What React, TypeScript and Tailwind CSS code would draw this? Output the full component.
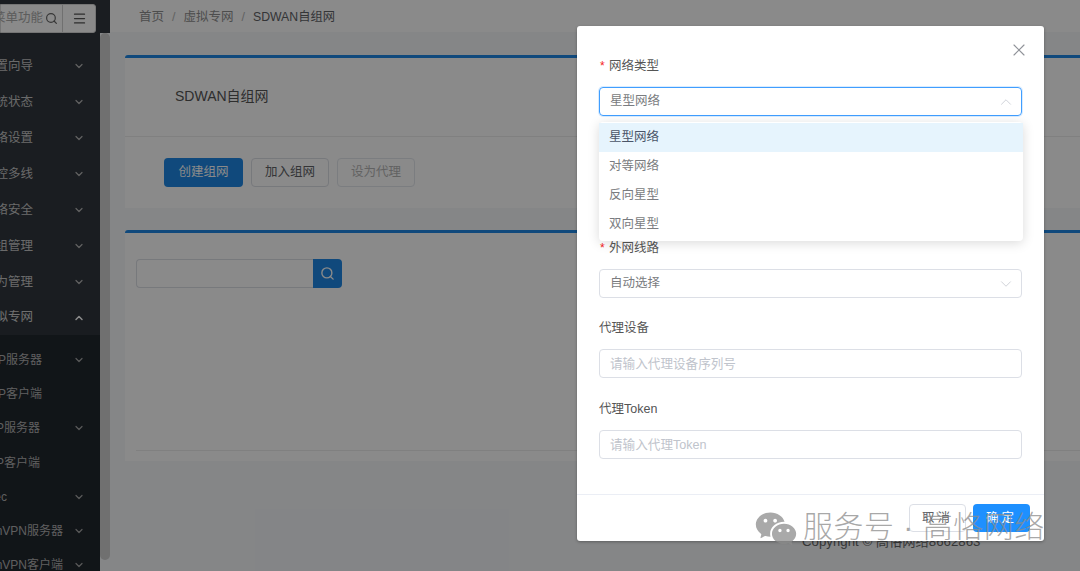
import { ChevronDown, ChevronUp, Menu, Search, X } from "lucide-react";
import { RiWechatFill } from "react-icons/ri";

const topItems = [
  { label: "配置向导" },
  { label: "系统状态" },
  { label: "网络设置" },
  { label: "智控多线" },
  { label: "网络安全" },
  { label: "分组管理" },
  { label: "行为管理" },
];

const subItems = [
  { label: "PPTP服务器", w: "w-[42px]", arrow: true },
  { label: "PPTP客户端", w: "w-[42px]", arrow: false },
  { label: "L2TP服务器", w: "w-[40px]", arrow: true },
  { label: "L2TP客户端", w: "w-[40px]", arrow: false },
  { label: "IPSec", w: "w-[7px]", arrow: true },
  { label: "OpenVPN服务器", w: "w-[63px]", arrow: true },
  { label: "OpenVPN客户端", w: "w-[63px]", arrow: true },
];

function Clipped({ label, w }: { label: string; w: string }) {
  return (
    <span className={`${w} flex justify-end whitespace-nowrap`}>
      <span className="shrink-0">{label}</span>
    </span>
  );
}

function Sidebar() {
  return (
    <aside className="w-[100px] shrink-0 h-full overflow-hidden bg-[#30363d] text-[#c4c4c4] text-[12.5px]">
      <div className="h-[48px] pt-[4px] pr-[4px]">
        <div className="h-[29px] flex items-center bg-white border border-[#d8d8d8] rounded-r-[3px] text-[#aaa]">
          <span className="w-[42px] flex justify-end whitespace-nowrap">
            <span className="shrink-0">搜索菜单功能</span>
          </span>
          <Search className="ml-[2px] w-[13px] h-[13px] text-[#666]" strokeWidth={2.2} />
          <span className="ml-[4px] w-px h-full bg-[#cfcfcf]" />
          <Menu className="ml-[9px] w-[15px] h-[15px] text-[#555]" strokeWidth={2} />
        </div>
      </div>
      {topItems.map((it) => (
        <div key={it.label} className="h-[36px] flex items-center justify-between pr-[15px]">
          <Clipped label={it.label} w="w-[33px]" />
          <ChevronDown className="w-[12px] h-[12px] text-[#b5b5b5]" strokeWidth={2.4} />
        </div>
      ))}
      <div className="h-[35px] flex items-center justify-between pr-[15px] bg-[#2f353c] text-[#d0d0d0]">
        <Clipped label="虚拟专网" w="w-[33px]" />
        <ChevronUp className="w-[12px] h-[12px] text-white" strokeWidth={3} />
      </div>
      <div className="bg-[#20272e] pt-[8px] h-full text-[12px] text-[#b0b0b0]">
        {subItems.map((it) => (
          <div key={it.label} className="h-[34.2px] flex items-center justify-between pr-[15px]">
            <Clipped label={it.label} w={it.w} />
            {it.arrow && <ChevronDown className="w-[12px] h-[12px] text-[#a5a5a5]" strokeWidth={2.4} />}
          </div>
        ))}
      </div>
    </aside>
  );
}

function ScrollColumn() {
  return (
    <div className="w-[10px] shrink-0 h-full flex flex-col">
      <div className="h-[33px] bg-[#30363d]" />
      <div className="h-[527px] rounded-[5px] bg-[#cfcfcf]" />
    </div>
  );
}

function Content() {
  return (
    <main className="flex-1 min-w-0 h-full overflow-hidden flex flex-col">
      <div className="h-[32px] shrink-0 bg-white flex items-center pl-[29px] pt-[2px] text-[12.5px] text-[#8f8f8f] gap-[6px]">
        <span>首页</span>
        <span className="text-[#b5b5b5] mx-[2px]">/</span>
        <span>虚拟专网</span>
        <span className="text-[#b5b5b5] mx-[2px]">/</span>
        <span className="text-[#606266] text-[12.25px]">SDWAN自组网</span>
      </div>
      <div className="pl-[15px] pt-[23px] flex flex-col gap-[22px]">
        <section className="h-[153px] bg-white border-t-[3px] border-[#1e88e5] rounded-tl-[3px] flex flex-col">
          <div className="h-[79px] shrink-0 border-b border-[#ececec] flex items-center pb-[2px] pl-[50px] text-[14px] text-[#555]">
            SDWAN自组网
          </div>
          <div className="flex gap-[8px] pl-[39px] pt-[21px] text-[12.5px]">
            <button className="w-[79px] h-[29px] rounded-[4px] bg-[#1e88e5] text-white">创建组网</button>
            <button className="w-[78px] h-[29px] rounded-[4px] bg-white border border-[#dcdfe6] text-[#606266]">加入组网</button>
            <button className="w-[78px] h-[29px] rounded-[4px] bg-white border border-[#e4e7ed] text-[#b5b5b5]">设为代理</button>
          </div>
        </section>
        <section className="h-[231px] bg-white border-t-[3px] border-[#1e88e5] rounded-tl-[3px] pl-[11px] pt-[26px] flex flex-col">
          <div className="flex h-[29px] w-[206px]">
            <div className="w-[177px] rounded-l-[4px] border border-[#dcdfe6] border-r-0" />
            <div className="w-[29px] rounded-r-[4px] bg-[#1e88e5] flex items-center justify-center">
              <Search className="w-[15px] h-[15px] text-white" strokeWidth={2.2} />
            </div>
          </div>
          <div className="mt-[162px] h-px bg-[#ececec]" />
        </section>
      </div>
      <div className="pl-[692px] pt-[71px] text-[13.25px] text-[#666] whitespace-nowrap">Copyright © 高恪网络8662863</div>
    </main>
  );
}

function Field({ label, required, children }: { label: string; required?: boolean; children: React.ReactNode }) {
  return (
    <div>
      <div className="h-[20px] flex items-center text-[12.5px] text-[#555]">
        {required && <span className="w-[10px] pl-[1px] text-[#f52222] text-[12px] leading-none">*</span>}
        <span>{label}</span>
      </div>
      <div className="mt-[11px]">{children}</div>
    </div>
  );
}

function Modal() {
  return (
    <div className="absolute left-[577px] top-[26px] w-[467px] h-[515px] bg-white rounded-[3px] flex flex-col shadow-[0_1px_3px_rgba(0,0,0,0.3)]">
      <button className="absolute right-[15px] top-[14px] text-[#909399]">
        <X className="w-[20px] h-[20px]" strokeWidth={1.4} />
      </button>
      <div className="flex-1 px-[22px] pt-[30px]">
        <Field label="网络类型" required>
          <div className="relative">
            <div className="h-[29px] rounded-[4px] border border-[#409eff] shadow-[0_0_0_1px_rgba(64,158,255,0.2)] flex items-center justify-between pl-[10px] pr-[6px] text-[12.5px] text-[#7a7c80]">
              <span>星型网络</span>
              <ChevronUp className="w-[18px] h-[18px] text-[#c0c4cc]" strokeWidth={1} />
            </div>
            <div className="absolute left-0 top-[35px] w-[424px] pt-[1px] pb-[2px] bg-white rounded-[4px] shadow-[0_2px_12px_rgba(0,0,0,0.15)] text-[12.5px] text-[#7a7c80] z-10">
              <div className="h-[29px] flex items-center px-[10px] bg-[#e6f4fd] text-[#4a5568]">星型网络</div>
              <div className="h-[29px] flex items-center px-[10px]">对等网络</div>
              <div className="h-[29px] flex items-center px-[10px]">反向星型</div>
              <div className="h-[29px] flex items-center px-[10px]">双向星型</div>
            </div>
          </div>
        </Field>
        <div className="mt-[122px]">
          <Field label="外网线路" required>
            <div className="h-[29px] rounded-[4px] border border-[#dcdfe6] flex items-center justify-between pl-[10px] pr-[6px] text-[12.5px] text-[#7a7c80]">
              <span>自动选择</span>
              <ChevronDown className="w-[18px] h-[18px] text-[#c0c4cc]" strokeWidth={1} />
            </div>
          </Field>
        </div>
        <div className="mt-[20px]">
          <Field label="代理设备">
            <div className="h-[29px] rounded-[4px] border border-[#dcdfe6] flex items-center pl-[10px] pt-[1px] text-[12.6px] text-[#c0c4cc]">
              请输入代理设备序列号
            </div>
          </Field>
        </div>
        <div className="mt-[21px]">
          <Field label="代理Token">
            <div className="h-[29px] rounded-[4px] border border-[#dcdfe6] flex items-center pl-[10px] pt-[1px] text-[12.6px] text-[#c0c4cc]">
              请输入代理Token
            </div>
          </Field>
        </div>
      </div>
      <div className="h-[47px] shrink-0 border-t border-[#ebeef5] flex justify-end gap-[7px] pr-[14px] pt-[9px] text-[12.5px]">
        <button className="w-[57px] h-[28px] rounded-[4px] border border-[#dcdfe6] bg-white text-[#606266] tracking-[3px]">取消</button>
        <button className="w-[57px] h-[28px] rounded-[4px] bg-[#1e90ff] text-white tracking-[3px]">确定</button>
      </div>
    </div>
  );
}

export default function App() {
  return (
    <div className="relative w-[1080px] h-[571px] overflow-hidden flex bg-[#f5f7fa] font-['Liberation_Sans','Noto_Sans_CJK_SC',sans-serif]">
      <Sidebar />
      <ScrollColumn />
      <Content />
      <div className="absolute inset-0 bg-black/[0.46]" />
      <Modal />
      <div className="absolute left-[754px] top-[507px] flex items-center h-[44px] text-[#8c8c8c]/75 pointer-events-none">
        <RiWechatFill className="w-[44px] h-[44px]" />
        <span className="ml-[5px] mb-[4px] text-[30px] leading-none font-light tracking-[0.5px] whitespace-nowrap">服务号 · 高恪网络</span>
      </div>
    </div>
  );
}
